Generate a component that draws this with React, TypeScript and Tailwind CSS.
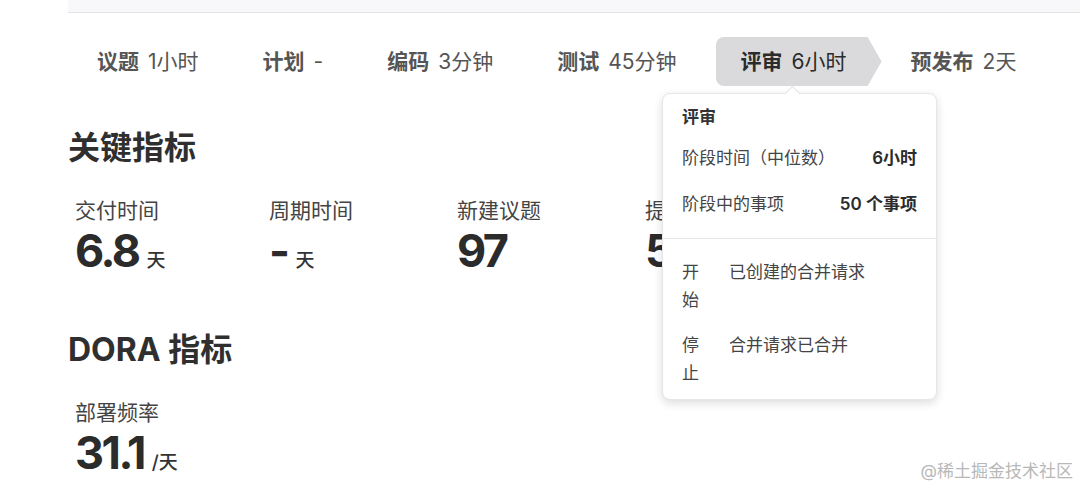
const tabs = [
  { name: '议题', value: '1小时' },
  { name: '计划', value: '-' },
  { name: '编码', value: '3分钟' },
  { name: '测试', value: '45分钟' },
  { name: '评审', value: '6小时', active: true },
  { name: '预发布', value: '2天' },
];

const keyMetrics = [
  { label: '交付时间', value: '6.8', unit: '天', width: 'w-[194px]' },
  { label: '周期时间', value: '-', unit: '天', width: 'w-[188px]' },
  { label: '新建议题', value: '97', unit: '', width: 'w-[188px]' },
  { label: '提交', value: '512', unit: '', width: 'w-[188px]' },
];

function Metric({ label, value, unit, width }: { label: string; value: string; unit: string; width?: string }) {
  return (
    <div className={`${width ?? ''} shrink-0`}>
      <div className="text-[21px] leading-[28px] text-[#444]">{label}</div>
      <div className="mt-[3px] flex items-baseline">
        <span className="text-[45px] leading-[46px] font-bold tracking-[-2.5px] text-[#2b2b2b]">{value}</span>
        {unit && <span className="ml-[8px] text-[19px] font-medium text-[#333]">{unit}</span>}
      </div>
    </div>
  );
}

function StagePopover() {
  return (
    <div className="absolute left-[662px] top-[93px] w-[275px] h-[307px] rounded-lg border border-[#e6e6e8] bg-white shadow-[0_3px_10px_rgba(0,0,0,0.14)] text-[17px] leading-[28px]">
      <div className="absolute -top-[6px] left-[124px] h-[11px] w-[11px] rotate-45 border-l border-t border-[#e3e3e5] bg-white" />
      <div className="px-[19px] pt-[9px] pb-[20px]">
        <div className="font-semibold text-[#333]">评审</div>
        <div className="mt-[13px] flex justify-between">
          <span className="text-[#444]">阶段时间（中位数）</span>
          <span className="font-semibold text-[#2b2b2b]">6小时</span>
        </div>
        <div className="mt-[18px] flex justify-between">
          <span className="text-[#444]">阶段中的事项</span>
          <span className="font-semibold text-[#2b2b2b]">50 个事项</span>
        </div>
      </div>
      <div className="border-t border-[#e6e6e8] px-[19px] pt-[19px] text-[#444]">
        <div className="grid grid-cols-[28px_1fr] gap-x-[19px]">
          <span>开始</span>
          <span>已创建的合并请求</span>
        </div>
        <div className="mt-[17px] grid grid-cols-[28px_1fr] gap-x-[19px]">
          <span>停止</span>
          <span>合并请求已合并</span>
        </div>
      </div>
    </div>
  );
}

export default function App() {
  return (
    <div className="relative h-[492px] w-[1080px] overflow-hidden bg-white font-['Inter','Noto_Sans_CJK_SC',sans-serif]">
      <div className="ml-[68px] h-[13px] border-b border-[#e4e4e7] bg-[#f8f8fa]" />

      <div className="ml-[72px] mt-[24px] flex h-[49px] items-stretch text-[21px] text-[#555]">
        {tabs.map((tab) => (
          <div
            key={tab.name}
            className={`flex items-center pl-[25px] pr-[39px] ${
              tab.active
                ? 'rounded-l-lg bg-[#dadadc] text-[#2b2b2b] [clip-path:polygon(0_0,calc(100%_-_18px)_0,calc(100%_-_4px)_50%,calc(100%_-_18px)_100%,0_100%)]'
                : ''
            }`}
          >
            <span className="font-semibold">{tab.name}</span>
            <span className="ml-[9px]">{tab.value}</span>
          </div>
        ))}
      </div>

      <div className="ml-[68px]">
        <h2 className="mt-[42px] text-[32px] leading-[40px] font-bold text-[#2f2f2f]">关键指标</h2>
        <div className="ml-[7px] mt-[29px] flex">
          {keyMetrics.map((m) => (
            <Metric key={m.label} {...m} />
          ))}
        </div>

        <h2 className="mt-[54px] text-[32px] leading-[40px] font-bold text-[#2f2f2f]">DORA 指标</h2>
        <div className="ml-[7px] mt-[29px] flex">
          <Metric label="部署频率" value="31.1" unit="/天" />
        </div>
      </div>

      <StagePopover />

      <div className="absolute bottom-[8px] right-[7px] text-[17px] text-[#b8b8b8]">@稀土掘金技术社区</div>
    </div>
  );
}
